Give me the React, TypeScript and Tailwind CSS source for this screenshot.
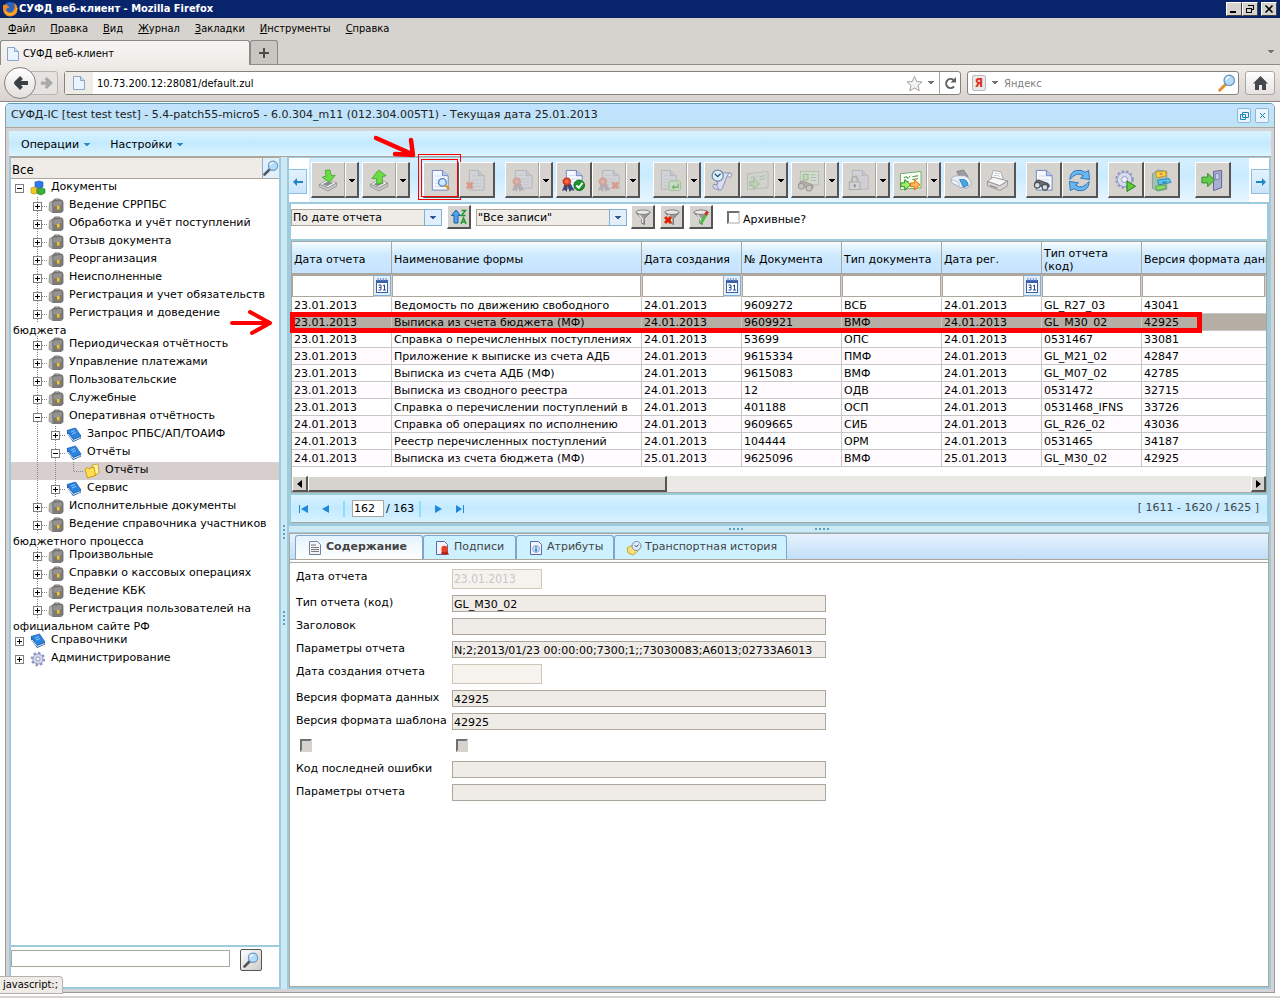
import type { ReactNode } from "react";

/* ---------- small drawings ---------- */

const Caret = ({ className = "" }: { className?: string }) => (
  <svg width="6" height="4" viewBox="0 0 6 4" className={className} shapeRendering="crispEdges">
    <path d="M0 0h6L3 4z" fill="currentColor" />
  </svg>
);

const Page = ({ x = 2, y = 1, w = 16, h = 20, dim = false }: { x?: number; y?: number; w?: number; h?: number; dim?: boolean }) => {
  const f = Math.round(w * 0.36);
  return (
    <g transform={`translate(${x} ${y})`}>
      <path d={`M.5 .5H${w - f}L${w} ${f}V${h}H.5z`} fill={dim ? "#d2d3d6" : "#f4f8ff"} stroke={dim ? "#b3b5be" : "#7484bc"} />
      <path d={`M${w - f} .5V${f}H${w}`} fill={dim ? "#c4c6ce" : "#b4c8ec"} stroke={dim ? "#b3b5be" : "#7484bc"} />
      <path d={`M3 ${h * 0.3}H${w - f - 1}M3 ${h * 0.5}H${w - 3}M3 ${h * 0.66}H${w - 3}M3 ${h * 0.82}H${w - 3}`} stroke={dim ? "#c3c5cb" : "#d0d9ea"} />
    </g>
  );
};

const Seal = ({ x = 5, y = 14, dim = false, r = 4 }: { x?: number; y?: number; dim?: boolean; r?: number }) => (
  <g>
    <path d={`M${x - 2} ${y + 2}l-3 8 3-1 2 2 1-6 2 6 2-2 3 1-4-8z`} fill={dim ? "#b4aeb4" : "#3b4672"} />
    <circle cx={x} cy={y} r={r} fill={dim ? "#d2a599" : "#e04020"} stroke={dim ? "#cb9c90" : "#b02810"} strokeDasharray="1.5 1" />
    <circle cx={x} cy={y} r={r / 2} fill={dim ? "#dab6ac" : "#ff7048"} />
  </g>
);

const Cross = ({ x, y, dim = false, s = 3 }: { x: number; y: number; dim?: boolean; s?: number }) => (
  <path d={`M${x - s} ${y - s}L${x + s} ${y + s}M${x + s} ${y - s}L${x - s} ${y + s}`} stroke={dim ? "#d99a88" : "#dd2200"} strokeWidth="3" />
);

const Tray = () => (
  <g strokeWidth=".7">
    <path d="M2.500 16l9-5 9 3.500-9 5z" fill="#fafafa" stroke="#888" />
    <path d="M2.500 16v2.500l9 4.500 9-5v-3.500l-9 5z" fill="#c4c6ca" stroke="#888" />
    <path d="M5.500 16l6.500-3.500 5 2-6.500 3.500z" fill="#8b8d92" />
  </g>
);

const GreenArrow = ({ x, y, orange = false, dim = false }: { x: number; y: number; orange?: boolean; dim?: boolean }) => (
  <path
    transform={`translate(${x} ${y})`}
    d="M0 3.500h4V0l6 5.500-6 5.500V7.500H0z"
    fill={orange ? "#ffb45c" : dim ? "#bdd2b6" : "#a4ee70"}
    stroke={orange ? "#e07000" : dim ? "#9fb99a" : "#25891c"}
  />
);

const Card = ({ dim = false }: { dim?: boolean }) => (
  <g>
    <path d="M1.500 5L23 2.500V19.500L1.500 21.500z" fill={dim ? "#d0d3cd" : "#fafff6"} stroke={dim ? "#b4bcb1" : "#6aa866"} />
    <path d="M5 9l3-1 1 2 3-3M14 8l6-1M14 11l6-1M5 13h5" stroke={dim ? "#afbcab" : "#3f8a3c"} fill="none" />
  </g>
);

const Binocs = ({ dim = false }: { dim?: boolean }) => (
  <g stroke={dim ? "#a29f99" : "#4c4f54"} fill={dim ? "#cbc7c0" : "#d4dce4"} strokeWidth="1.200">
    <path d="M2 16l2-3q2-1 3 0l8 3q2 1 2 3l-2 2-10-3z" fill={dim ? "#b4b0a9" : "#6e7076"} />
    <circle cx="4.500" cy="18" r="3" />
    <circle cx="12.500" cy="20" r="3" />
  </g>
);

const Gear = ({ cx, cy, r, fill = "#d7dbee", stroke = "#8f97c2" }: { cx: number; cy: number; r: number; fill?: string; stroke?: string }) => (
  <g>
    <circle cx={cx} cy={cy} r={r + 0.5} fill="none" stroke={stroke} strokeWidth="2.400" strokeDasharray="2.400 2.200" />
    <circle cx={cx} cy={cy} r={r - 0.4} fill={fill} stroke={stroke} />
    <circle cx={cx} cy={cy} r={r / 2.6} fill="#f3f3f8" stroke={stroke} />
  </g>
);

const Magnifier = ({ size = 16, handle = "#54585e" }: { size?: number; handle?: string }) => (
  <svg width={size} height={size} viewBox="0 0 16 16">
    <path d="M1.500 14.500L7 9" stroke={handle} strokeWidth="2.600" strokeLinecap="round" />
    <circle cx="10" cy="5.700" r="4.600" fill="#b4dcf8" stroke="#6d98c4" strokeWidth="1.200" />
    <path d="M7.200 5a3 3 0 0 1 3-2.300" stroke="#fff" strokeWidth="1.200" fill="none" />
  </svg>
);

const glyphs: Record<string, ReactNode> = {
  import: (
    <>
      <Tray />
      <path d="M8.500 1.500l5-.5 1.500 6 4-.500-6 7.500-7.500-5.500 4-1z" fill="#6cdc44" stroke="#3aa028" strokeWidth=".8" />
    </>
  ),
  export: (
    <>
      <Tray />
      <path d="M11 1l8 6-4 1v6.500l-6 1.500V10L4 10z" fill="#6cdc44" stroke="#3aa028" strokeWidth=".8" />
    </>
  ),
  preview: (
    <>
      <Page x={3} y={1} w={17} h={21} />
      <circle cx="14" cy="14" r="4" fill="#cde9ff" stroke="#5080d0" strokeWidth="1.400" />
      <path d="M17 17l4 4" stroke="#d89a20" strokeWidth="2.400" />
    </>
  ),
  remove: (
    <>
      <Page x={4} y={1} w={16} h={21} dim />
      <Cross x={5} y={17} dim />
    </>
  ),
  sealDim: (
    <>
      <Page x={4} y={1} w={18} h={19} dim />
      <Seal x={6} y={13} dim />
    </>
  ),
  sealOk: (
    <>
      <Page x={4} y={1} w={17} h={19} />
      <Seal x={5} y={13} />
      <circle cx="18" cy="17" r="5.500" fill="#18942a" stroke="#0d6a1a" />
      <path d="M15 17l2.400 2.600L21.500 14.500" stroke="#fff" strokeWidth="2" fill="none" />
    </>
  ),
  sealNo: (
    <>
      <Page x={4} y={1} w={18} h={19} dim />
      <Seal x={5} y={13} dim />
      <Cross x={18} y={17} dim />
    </>
  ),
  pageBack: (
    <>
      <Page x={2} y={1} w={16} h={20} dim />
      <rect x="10.500" y="12.500" width="12" height="10" rx="2" fill="#c8dcc2" stroke="#9dbf96" />
      <path d="M20 15v4h-6m2-2l-2 2 2 2" stroke="#7fb078" fill="none" strokeWidth="1.400" />
    </>
  ),
  history: (
    <>
      <path d="M8 4h12q3 0 2 3h-4L13 20q-1 3-4 2l-5-2q-2-3 0-4h4z" fill="#d9ddf0" stroke="#8890b4" />
      <circle cx="20.500" cy="6.500" r="2" fill="#eef0fa" stroke="#8890b4" />
      <path d="M4 16q4 0 5 6" stroke="#8890b4" />
      <circle cx="8" cy="7" r="5.800" fill="#dcf1fb" stroke="#6f8ca8" strokeWidth="1.400" />
      <path d="M5 5l3 3 3-3" stroke="#27527c" fill="none" strokeWidth="1.400" />
    </>
  ),
  cardDim: (
    <>
      <Card dim />
      <GreenArrow x={4} y={10} dim />
    </>
  ),
  idView: (
    <>
      <rect x="3.500" y="2.500" width="19" height="14" fill="#d5dbd1" stroke="#b0beaa" />
      <rect x="6.500" y="5.500" width="5" height="6" fill="#c0d8b6" stroke="#96ba8a" />
      <path d="M14 6h6M14 9h6M14 12h6" stroke="#aebba8" />
      <Binocs dim />
    </>
  ),
  lock: (
    <>
      <Page x={4} y={1} w={17} h={20} dim />
      <path d="M4 14v-3a3 3 0 0 1 6 0v3" fill="none" stroke="#b0b0b0" strokeWidth="1.800" />
      <rect x="1.500" y="13.500" width="11" height="8" fill="#d2d2d2" stroke="#aaa" />
      <path d="M7 16v3" stroke="#888" strokeWidth="1.800" />
    </>
  ),
  cardSend: (
    <>
      <Card />
      <GreenArrow x={2} y={11} />
      <GreenArrow x={12} y={11} orange />
    </>
  ),
  fax: (
    <g strokeWidth=".8">
      <path d="M7 2.500l7-1.500 5 7-8 2z" fill="#9a9ca2" stroke="#77797f" />
      <path d="M1.500 10q2-3 6-3l8 0q6 3 7 9l-5 4-7-1-8-4q-2-2-1-5z" fill="#e9eff6" stroke="#93a0b2" />
      <path d="M10 11l5 0q4 2 4 6l-5 2z" fill="#49a4e6" stroke="#2b78b8" />
      <path d="M2 11l7 2.500 1 4" stroke="#aebccc" />
    </g>
  ),
  print: (
    <g strokeWidth=".8">
      <path d="M5.500 9L7.500 1.500l8 1.500 2.500 8z" fill="#fff" stroke="#999" />
      <path d="M8.500 4l6 1M8 6.500l7 1" stroke="#b4bccc" />
      <path d="M1.500 13l6-4.500 15 4-8 5z" fill="#f6f6f6" stroke="#8a8a8a" />
      <path d="M1.500 13v4.500l13 5 8-5v-5l-8 5z" fill="#d6d6d6" stroke="#8a8a8a" />
      <path d="M4 17l8 3" stroke="#666" />
    </g>
  ),
  find: (
    <>
      <Page x={4} y={1} w={17} h={21} />
      <g transform="translate(1 -1)">
        <Binocs />
      </g>
    </>
  ),
  refresh: (
    <g fill="#6ab8f0" stroke="#2a72bc" strokeLinejoin="round">
      <path d="M2 11Q2 3 9 1.500q5-1 9 2l3.500-2 1 9.500-9.500-1.500 3-2.500q-3-2.500-7-1.500Q5 7 2 11z" />
      <path d="M22 13q0 8-7 9.500-5 1-9-2l-3.500 2-1-9.500 9.500 1.500-3 2.500q3 2.500 7 1.500 4-1.500 7-5.500z" />
    </g>
  ),
  gearRun: (
    <>
      <Gear cx={11} cy={11} r={8} />
      <path d="M13.500 12.500l9 5.500-9 5.500z" fill="#5ecb3c" stroke="#1e7d18" />
    </>
  ),
  cabinet: (
    <g strokeWidth=".8">
      <path d="M2.500 5l6-4 9 1.500V21l-9 2-6-3z" fill="#a3c0b2" stroke="#6f9283" />
      <path d="M6 3.500l10-1.500 1 5-10 2z" fill="#ffd24a" stroke="#c98a00" />
      <path d="M8 11.500l12-1.500 2 4-13 2.500z" fill="#56c4f0" stroke="#2277aa" />
      <path d="M6 18l10-1.500v4l-9 2z" fill="#8bda6a" stroke="#4a9a3a" />
      <path d="M10 5.500l3-.5M13 14l4-.5" stroke="#444" />
    </g>
  ),
  exit: (
    <>
      <path d="M13 2.500L21.500 1.500v18L13 22.500z" fill="#a6aed2" stroke="#5c648e" />
      <path d="M15 5l4-.5v6l-4 .5z" fill="#c8cee8" stroke="#7078a4" strokeWidth=".8" />
      <path d="M1 8.500h6V4.500l7 7-7 7v-4H1z" fill="#62cc48" stroke="#2a8a22" />
    </>
  ),
};

const Glyph = ({ name }: { name: string }) => (
  <svg width="23" height="23" viewBox="0 0 24 24" fill="none" aria-hidden="true">
    {glyphs[name]}
  </svg>
);

const SmallGlyph = ({ children, size = 16 }: { children: ReactNode; size?: number }) => (
  <svg width={size} height={size} viewBox="0 0 16 16" fill="none" className="shrink-0">
    {children}
  </svg>
);

const treeIcons: Record<string, ReactNode> = {
  cubes: (
    <>
      <path d="M5 2l4-1 4 1v5l-4 1.500L5 7z" fill="#2f78e8" stroke="#1a50b0" strokeWidth=".6" />
      <path d="M1 8l3-1 3 1v5l-3 1-3-1z" fill="#f2c820" stroke="#b08a00" strokeWidth=".6" />
      <path d="M7 9l4-1 4 1v4l-4 2-4-1.500z" fill="#3dae38" stroke="#1d7a20" strokeWidth=".6" />
    </>
  ),
  bag: (
    <>
      <path d="M6 2.500l1-1.500h4l1 1.500" stroke="#777" strokeWidth="1.200" />
      <path d="M4 3.500l2-1.500h8l1 2v9l-2 1.500H4.500z" fill="#7d7b78" stroke="#686663" strokeWidth=".8" />
      <path d="M4 3.500L1.500 4.500 1 12.500l3.500 2z" fill="#b4b2af" stroke="#8c8a87" strokeWidth=".8" />
      <path d="M5.500 4l8-1v4l-4 2-4-1z" fill="#969491" />
      <rect x="9" y="8" width="2.500" height="3.500" fill="#f4c522" />
    </>
  ),
  book: (
    <>
      <path d="M1 3.500L9.500 1l5.500 8-8 3.500z" fill="#2a84e0" stroke="#1a62b4" strokeWidth=".8" />
      <path d="M1 3.500v3L7 15l8-3.500V9l-8 3.500z" fill="#1a5cac" />
      <path d="M2 7l5.200 6.500 7.300-3" stroke="#eef4fb" />
      <path d="M5 5l4-1.500M6 7l4-1.500" stroke="#8cc4ff" />
    </>
  ),
  folder: (
    <>
      <path d="M8 2l6-1 1 9-6 3z" fill="#fff3a8" stroke="#c89a10" strokeWidth=".8" />
      <path d="M1 6l2-1.500 1.500 1 5.500-1.500 1.500 8.500-8 2.500z" fill="#ffdf50" stroke="#c08a00" strokeWidth=".8" />
    </>
  ),
  gear: <Gear cx={8} cy={8} r={5.5} />,
};

/* ---------- browser chrome ---------- */

const menuItems = ["Файл", "Правка", "Вид", "Журнал", "Закладки", "Инструменты", "Справка"];

const Sheet = () => (
  <SmallGlyph>
    <path d="M2.500 1.500h7l4 4v9h-11z" fill="#eaf4ff" stroke="#8aa6cc" />
    <path d="M9.500 1.500v4h4" fill="#c8def8" stroke="#8aa6cc" />
  </SmallGlyph>
);

const WinButton = ({ label, children }: { label: string; children: ReactNode }) => (
  <button
    aria-label={label}
    className="flex h-[14px] w-[16px] items-center justify-center border border-t-white border-r-[#404040] border-b-[#404040] border-l-white bg-[#d6d3ce]"
  >
    <svg width="10" height="10" viewBox="0 0 10 10" fill="none" stroke="#000" shapeRendering="crispEdges">
      {children}
    </svg>
  </button>
);

const BrowserChrome = () => (
  <header className="font-['DejaVu_Sans_Condensed','DejaVu_Sans',sans-serif] text-[11px]">
    <div className="flex h-[18px] items-center bg-[#08246b] pr-[3px] pl-[2px] text-white">
      <SmallGlyph>
        <circle cx="8" cy="8" r="7" fill="#2c62c0" />
        <path d="M1 4q-1 11 7 11.500Q16 15 15.500 7q-1-4-4-5.500 2 3 1 5-1 5-5 5-4-.5-3-4l3-1-3-3z" fill="#f08a1c" />
        <path d="M3 11q3 4 8 2 3-2 4-6" stroke="#ffd040" />
      </SmallGlyph>
      <h1 className="ml-px flex-1 font-bold">СУФД веб-клиент - Mozilla Firefox</h1>
      <div className="flex">
        <WinButton label="Свернуть">
          <path d="M1 8h6" strokeWidth="2" />
        </WinButton>
        <WinButton label="Восстановить">
          <path d="M3.500 1.500h5v4h-2M3 1.500h6M1.500 4.500h5v4h-5zM1 4.500h6" />
        </WinButton>
        <span className="w-[3px]" />
        <WinButton label="Закрыть">
          <path d="M1.500 1.500l7 7M8.500 1.500l-7 7" strokeWidth="1.600" shapeRendering="auto" />
        </WinButton>
      </div>
    </div>
    <nav className="flex h-[22px] items-center gap-[15px] bg-[#d6d3ce] pl-2">
      {menuItems.map((m) => (
        <a key={m} href="#" className="text-black">
          <span className="underline">{m[0]}</span>
          {m.slice(1)}
        </a>
      ))}
    </nav>
    <div className="flex h-[25px] items-end border-b border-[#8c8a86] bg-[#d6d3ce]">
      <div className="-mb-px flex h-[25px] w-[250px] items-center gap-[2px] rounded-t-[3px] border border-b-0 border-[#8c8a86] bg-gradient-to-b from-[#f7f5f3] to-[#efebe7] pt-[2px] pl-1">
        <Sheet />
        <span>СУФД веб-клиент</span>
      </div>
      <button aria-label="Новая вкладка" className="flex h-[24px] w-[28px] items-center justify-center rounded-t-[3px] border border-b-0 border-[#8c8a86] bg-[#c9c6c2]">
        <svg width="10" height="10" viewBox="0 0 10 10" stroke="#4a4a4a" strokeWidth="2">
          <path d="M5 0v10M0 5h10" />
        </svg>
      </button>
      <span className="flex-1" />
      <Caret className="mr-[6px] mb-[10px] text-[#77736e]" />
    </div>
    <div className="flex h-[37px] items-center border-b border-[#8c8a86] bg-gradient-to-b from-[#efebe7] to-[#d9d3d0] pr-[5px] pl-[4px]">
      <button aria-label="Назад" className="z-10 flex h-[32px] w-[32px] items-center justify-center rounded-full border border-[#85827e] bg-gradient-to-b from-white to-[#e3dfdc]">
        <svg width="15" height="14" viewBox="0 0 15 14" fill="none" stroke="#3c4048" strokeWidth="4" strokeLinejoin="round">
          <path d="M8.500 1.500L3 7l5.500 5.500M3 7H15" />
        </svg>
      </button>
      <button aria-label="Вперёд" className="-ml-[6px] flex h-[24px] w-[28px] items-center justify-center rounded-r-[3px] border border-[#b9b5b1] bg-[#e6e2df] pl-1">
        <svg width="13" height="12" viewBox="0 0 16 14" fill="none" stroke="#a9a9a9" strokeWidth="4">
          <path d="M7 1l6 6-6 6M12.500 7H1" />
        </svg>
      </button>
      <div className="ml-[6px] flex h-[24px] flex-1 items-center rounded-[3px] border border-[#85827e] bg-white">
        <span className="flex h-full w-[28px] items-center justify-center bg-[#efebe7]">
          <Sheet />
        </span>
        <input aria-label="Адрес" defaultValue="10.73.200.12:28081/default.zul" className="min-w-0 flex-1 bg-transparent pt-[2px] pl-1 text-[11px] outline-none" />
        <svg width="17" height="17" viewBox="0 0 18 17" fill="#f2f2f2" stroke="#a09d99">
          <path d="M9 1l2.300 5.300 5.700.5-4.300 3.800 1.300 5.600L9 13.200l-5 3 1.300-5.600L1 6.800l5.700-.5z" />
        </svg>
        <Caret className="mx-[5px] text-[#77736e]" />
        <button aria-label="Обновить" className="flex h-full w-[21px] items-center justify-center border-l border-[#aaa6a2]">
          <svg width="13" height="13" viewBox="0 0 13 13" fill="none" stroke="#5e6064" strokeWidth="2">
            <path d="M10 9.500A4.500 4.500 0 1 1 9.500 3" />
            <path d="M12 0v5.500H6.500z" fill="#5e6064" stroke="none" />
          </svg>
        </button>
      </div>
      <div className="ml-[6px] flex h-[24px] w-[272px] items-center rounded-[3px] border border-[#85827e] bg-white pl-1">
        <span className="flex h-[16px] w-[14px] items-center justify-center rounded-[2px] border border-[#bbb] bg-[#e9e9e9] text-[12px] font-bold text-[#e0301e]">Я</span>
        <Caret className="mx-[6px] text-[#77736e]" />
        <input aria-label="Поиск" placeholder="Яндекс" className="min-w-0 flex-1 pt-[2px] text-[11px] outline-none placeholder:text-[#808080]" />
        <span className="mr-[2px]">
          <Magnifier size={18} handle="#e09030" />
        </span>
      </div>
      <button aria-label="Домой" className="ml-[6px] flex h-[24px] w-[30px] items-center justify-center rounded-[3px] border border-[#aaa6a2] bg-gradient-to-b from-white to-[#e6e2df]">
        <svg width="15" height="14" viewBox="0 0 15 14" fill="#45494f">
          <path d="M7.500 0L15 7.500h-2V14H9V9H6v5H2V7.500H0z" />
        </svg>
      </button>
    </div>
  </header>
);

/* ---------- left tree ---------- */

type Node = { level: number; icon: string; text: string; more?: string; open?: boolean; leaf?: boolean; selected?: boolean };

const tree: Node[] = [
  { level: 0, icon: "cubes", text: "Документы", open: true },
  { level: 1, icon: "bag", text: "Ведение СРРПБС" },
  { level: 1, icon: "bag", text: "Обработка и учёт поступлений" },
  { level: 1, icon: "bag", text: "Отзыв документа" },
  { level: 1, icon: "bag", text: "Реорганизация" },
  { level: 1, icon: "bag", text: "Неисполненные" },
  { level: 1, icon: "bag", text: "Регистрация и учет обязательств" },
  { level: 1, icon: "bag", text: "Регистрация и доведение", more: "бюджета" },
  { level: 1, icon: "bag", text: "Периодическая отчётность" },
  { level: 1, icon: "bag", text: "Управление платежами" },
  { level: 1, icon: "bag", text: "Пользовательские" },
  { level: 1, icon: "bag", text: "Служебные" },
  { level: 1, icon: "bag", text: "Оперативная отчётность", open: true },
  { level: 2, icon: "book", text: "Запрос РПБС/АП/ТОАИФ" },
  { level: 2, icon: "book", text: "Отчёты", open: true },
  { level: 3, icon: "folder", text: "Отчёты", leaf: true, selected: true },
  { level: 2, icon: "book", text: "Сервис" },
  { level: 1, icon: "bag", text: "Исполнительные документы" },
  { level: 1, icon: "bag", text: "Ведение справочника участников", more: "бюджетного процесса" },
  { level: 1, icon: "bag", text: "Произвольные" },
  { level: 1, icon: "bag", text: "Справки о кассовых операциях" },
  { level: 1, icon: "bag", text: "Ведение КБК" },
  { level: 1, icon: "bag", text: "Регистрация пользователей на", more: "официальном сайте РФ" },
  { level: 0, icon: "book", text: "Справочники" },
  { level: 0, icon: "gear", text: "Администрирование" },
];

const Toggle = ({ node }: { node: Node }) => (
  <svg width="18" height="18" viewBox="0 0 18 18" fill="none" shapeRendering="crispEdges" className="shrink-0">
    {node.level > 0 && <path d={node.leaf ? "M8.500 0v9" : "M8.500 0v18"} stroke="#888" strokeDasharray="1 1" />}
    {node.level > 0 && <path d="M9 9.500h9" stroke="#888" strokeDasharray="1 1" />}
    {!node.leaf && (
      <>
        <rect x="4.500" y="5.500" width="8" height="8" fill="#fff" stroke="#808080" />
        <path d={node.open ? "M6 9.500h5" : "M6 9.500h5M8.500 7v5"} stroke="#000" />
      </>
    )}
  </svg>
);

const Guide = ({ visible }: { visible: boolean }) => (
  <svg width="18" height="18" viewBox="0 0 18 18" shapeRendering="crispEdges" className="shrink-0">
    {visible && <path d="M8.500 0v18" stroke="#888" strokeDasharray="1 1" />}
  </svg>
);

const TreePanel = () => (
  <aside className="flex w-[272px] shrink-0 flex-col border-x-2 border-b-2 border-[#9ccbde] bg-white">
    <div className="flex h-[22px] border-t border-b border-[#ada69c] bg-[#efebe7]">
      <span className="flex-1 pl-px font-['DejaVu_Sans_Condensed','DejaVu_Sans',sans-serif] text-[13px] leading-[24px]">Все</span>
      <button aria-label="Найти" className="flex w-[17px] items-center justify-center border-l border-[#7fb0d8] bg-[#e2effa]">
        <Magnifier size={16} />
      </button>
    </div>
    <ul className="flex-1 text-[11px]">
      {tree.map((n, i) => (
        <li key={i} className={n.selected ? "bg-[#d6cfce]" : ""}>
          <div className="flex h-[18px] items-start">
            {Array.from({ length: n.level }, (_, k) => (
              <Guide key={k} visible={k > 0} />
            ))}
            <Toggle node={n} />
            <span className="flex h-[18px] w-[18px] shrink-0 items-center justify-center">
              <SmallGlyph>{treeIcons[n.icon]}</SmallGlyph>
            </span>
            <a href="#" className="pl-[4px] leading-[15px] whitespace-nowrap">
              {n.text}
            </a>
          </div>
          {n.more && (
            <a href="#" className="block h-[13px] pl-[2px] leading-[15px] whitespace-nowrap">
              {n.more}
            </a>
          )}
        </li>
      ))}
    </ul>
    <div className="flex h-[42px] items-start border-t-2 border-[#9ccbde] pt-[3px]">
      <input aria-label="Поиск по дереву" className="h-[17px] w-[219px] border border-[#ada69c] px-1 text-[11px]" />
      <button aria-label="Искать" className="-mt-px ml-[10px] flex h-[22px] w-[22px] items-center justify-center rounded-[2px] border border-[#555] bg-gradient-to-br from-white to-[#cfcbc8]">
        <Magnifier size={16} />
      </button>
    </div>
  </aside>
);

/* ---------- toolbar ---------- */

type Tool = { icon: string; label: string; menu?: boolean; gap: string };

const tools: Tool[] = [
  { icon: "import", label: "Импорт", menu: true, gap: "ml-[2px]" },
  { icon: "export", label: "Экспорт", menu: true, gap: "ml-[3px]" },
  { icon: "preview", label: "Просмотр", gap: "ml-[13px]" },
  { icon: "remove", label: "Удалить", gap: "" },
  { icon: "sealDim", label: "Подписать", menu: true, gap: "ml-[10px]" },
  { icon: "sealOk", label: "Проверить подпись", gap: "ml-[3px]" },
  { icon: "sealNo", label: "Удалить подпись", menu: true, gap: "" },
  { icon: "pageBack", label: "Вернуть", menu: true, gap: "ml-[13px]" },
  { icon: "history", label: "История", gap: "ml-[3px]" },
  { icon: "cardDim", label: "Отправить", menu: true, gap: "" },
  { icon: "idView", label: "Реквизиты", menu: true, gap: "ml-[3px]" },
  { icon: "lock", label: "Блокировка", menu: true, gap: "ml-[3px]" },
  { icon: "cardSend", label: "Передать", menu: true, gap: "ml-[3px]" },
  { icon: "fax", label: "Печать формы", gap: "ml-[3px]" },
  { icon: "print", label: "Печать", gap: "" },
  { icon: "find", label: "Поиск", gap: "ml-[10px]" },
  { icon: "refresh", label: "Обновить список", gap: "" },
  { icon: "gearRun", label: "Выполнить", gap: "ml-[10px]" },
  { icon: "cabinet", label: "Архив", gap: "" },
  { icon: "exit", label: "Выход", gap: "ml-[15px]" },
];

const ToolButton = ({ tool }: { tool: Tool }) => (
  <div className={`relative flex h-[36px] shrink-0 ${tool.gap}`}>
    <button
      aria-label={tool.label}
      className={`flex items-center justify-center border border-t-white border-l-white bg-[#d6d3ce] pt-[2px] ${
        tool.menu ? "w-[34px] border-r border-r-[#aaa6a0] border-b-2 border-b-[#555]" : "w-[36px] border-r-2 border-b-2 border-r-[#555] border-b-[#555]"
      }`}
    >
      <Glyph name={tool.icon} />
    </button>
    {tool.menu && (
      <button
        aria-label={`${tool.label}: меню`}
        className="flex w-[14px] items-center justify-center border border-r-2 border-b-2 border-t-white border-r-[#555] border-b-[#555] border-l-white bg-[#d6d3ce] pt-[2px]"
      >
        <Caret />
      </button>
    )}
    {tool.icon === "preview" && (
      <span className="pointer-events-none absolute -top-[8px] -right-[2px] -bottom-[2px] -left-[5px] border border-[#f00] p-[2px] pt-[4px]">
        <span className="block h-full border border-[#f00]" />
      </span>
    )}
  </div>
);

const Toolbar = () => (
  <div className="flex h-[44px] items-center bg-gradient-to-b from-[#d6efff] via-[#c9ebff] via-40% to-[#e8f5ff]">
    <div className="flex h-full w-[20px] items-center bg-white pt-[3px]">
      <button aria-label="Прокрутить влево" className="flex h-[25px] w-[18px] items-center justify-center border border-l-0 border-[#8cbfe4] bg-gradient-to-b from-[#e4f3fd] to-[#cbe4fa]">
        <svg width="10" height="8" viewBox="0 0 10 8" fill="#1c86c8">
          <path d="M0 4l4-4v3h6v2H4v3z" />
        </svg>
      </button>
    </div>
    <div className="flex h-full min-w-0 flex-1 items-center" role="toolbar">
      {tools.map((t) => (
        <ToolButton key={t.icon} tool={t} />
      ))}
    </div>
    <div className="flex h-full w-[20px] shrink-0 items-center justify-end bg-white pt-[3px]">
      <button aria-label="Прокрутить вправо" className="flex h-[25px] w-[18px] items-center justify-center border border-r-0 border-[#8cbfe4] bg-gradient-to-b from-[#e4f3fd] to-[#cbe4fa]">
        <svg width="10" height="8" viewBox="0 0 10 8" fill="#1c86c8">
          <path d="M10 4L6 0v3H0v2h6v3z" />
        </svg>
      </button>
    </div>
  </div>
);

/* ---------- filters ---------- */

const Combo = ({ label, value }: { label: string; value: string }) => (
  <div className="relative h-[18px] w-[151px]">
    <select aria-label={label} className="block h-[17px] w-full appearance-none border border-[#ada69c] bg-[#efebe7] pl-px text-[11px] leading-[15px]">
      <option>{value}</option>
    </select>
    <span className="pointer-events-none absolute top-0 right-0 flex h-[17px] w-[18px] items-center justify-center border border-[#7fb0d8] bg-[#e2effa]">
      <Caret className="text-[#2c5a94]" />
    </span>
  </div>
);

const MiniButton = ({ label, children }: { label: string; children: ReactNode }) => (
  <button aria-label={label} className="flex h-[24px] w-[24px] items-center justify-center border border-r-2 border-b-2 border-t-white border-r-[#555] border-b-[#555] border-l-white bg-[#d6d3ce]">
    <SmallGlyph size={16}>{children}</SmallGlyph>
  </button>
);

const Funnel = () => (
  <>
    <path d="M1 3.500l5.500 6V14l3 1.500v-6l5.500-6z" fill="#9c9c9c" stroke="#6c6c6c" strokeWidth=".8" />
    <path d="M4 5.500l3.500 4.500v4" stroke="#e4e4e4" strokeWidth="1.400" />
    <ellipse cx="8" cy="3.200" rx="7" ry="2.200" fill="#e8e8e8" stroke="#6c6c6c" strokeWidth=".8" />
  </>
);

const FilterBar = () => (
  <div className="flex h-[35px] items-start bg-white">
    <div className="pt-[5px]">
      <Combo label="Сортировка" value="По дате отчета" />
    </div>
    <div className="mx-[5px] pt-px">
      <MiniButton label="Порядок сортировки">
        <path d="M5 1L.5 6.500H3V14h4V6.500h2.500z" fill="#4aa4ee" stroke="#1d5ca8" />
        <path d="M10.500 1.500h4l-4 5h4" stroke="#1c9a30" strokeWidth="1.500" />
        <path d="M10 15l2.500-6 2.500 6M11 13h3" stroke="#1c9a30" strokeWidth="1.500" />
      </MiniButton>
    </div>
    <div className="pt-[5px]">
      <Combo label="Фильтр" value={'"Все записи"'} />
    </div>
    <div className="ml-[4px] flex gap-[5px] pt-px">
      <MiniButton label="Фильтр">
        <Funnel />
      </MiniButton>
      <MiniButton label="Сбросить фильтр">
        <Funnel />
        <Cross x={4} y={11} s={3} />
      </MiniButton>
      <MiniButton label="Изменить фильтр">
        <Funnel />
        <path d="M14 4l-6 10" stroke="#4cc040" strokeWidth="3" />
        <path d="M14.500 2.500l-2 3.500" stroke="#d03030" strokeWidth="3" />
      </MiniButton>
    </div>
    <label className="ml-[14px] flex h-[32px] items-center gap-[3px] text-[11px]">
      <input type="checkbox" className="-mt-1.5 h-[13px] w-[13px] appearance-none border-2 border-t-[#707070] border-r-[#d6d3ce] border-b-[#d6d3ce] border-l-[#707070] bg-white" />
      Архивные?
    </label>
  </div>
);

/* ---------- grid ---------- */

const columns = [
  { title: "Дата отчета", width: "w-[100px]", date: true },
  { title: "Наименование формы", width: "w-[250px]" },
  { title: "Дата создания", width: "w-[100px]", date: true },
  { title: "№ Документа", width: "w-[100px]" },
  { title: "Тип документа", width: "w-[100px]" },
  { title: "Дата рег.", width: "w-[100px]", date: true },
  { title: "Тип отчета (код)", width: "w-[100px]" },
  { title: "Версия формата данных", width: "whitespace-nowrap overflow-hidden" },
];

const rows = [
  ["23.01.2013", "Ведомость по движению свободного", "24.01.2013", "9609272", "ВСБ", "24.01.2013", "GL_R27_03", "43041"],
  ["23.01.2013", "Выписка из счета бюджета (МФ)", "24.01.2013", "9609921", "ВМФ", "24.01.2013", "GL_M30_02", "42925"],
  ["23.01.2013", "Справка о перечисленных поступлениях", "24.01.2013", "53699", "ОПС", "24.01.2013", "0531467", "33081"],
  ["23.01.2013", "Приложение к выписке из счета АДБ", "24.01.2013", "9615334", "ПМФ", "24.01.2013", "GL_M21_02", "42847"],
  ["23.01.2013", "Выписка из счета АДБ (МФ)", "24.01.2013", "9615083", "ВМФ", "24.01.2013", "GL_M07_02", "42785"],
  ["23.01.2013", "Выписка из сводного реестра", "24.01.2013", "12", "ОДВ", "24.01.2013", "0531472", "32715"],
  ["23.01.2013", "Справка о перечислении поступлений в", "24.01.2013", "401188", "ОСП", "24.01.2013", "0531468_IFNS", "33726"],
  ["24.01.2013", "Справка об операциях по исполнению", "24.01.2013", "9609665", "СИБ", "24.01.2013", "GL_R26_02", "43036"],
  ["24.01.2013", "Реестр перечисленных поступлений", "24.01.2013", "104444", "ОРМ", "24.01.2013", "0531465", "34187"],
  ["24.01.2013", "Выписка из счета бюджета (МФ)", "25.01.2013", "9625096", "ВМФ", "25.01.2013", "GL_M30_02", "42925"],
];

const Calendar = () => (
  <svg width="12" height="15" viewBox="0 0 12 15">
    <rect x=".5" y="2.500" width="11" height="12" fill="#fff" stroke="#3b5fa8" />
    <path d="M0 2h12v3H0z" fill="#3b5fa8" />
    <path d="M2 0v3M4.700 0v3M7.300 0v3M10 0v3" stroke="#6f8cc8" />
    <path d="M2.500 7h2.500v5H2.500M3 9.500h2M7 8l1.500-1v5M7 12h3" stroke="#26478c" fill="none" />
  </svg>
);

const Grid = () => (
  <div className="relative border-t border-r border-l border-[#ada69c] bg-white">
    <div className="overflow-hidden">
      <table className="w-full table-fixed border-separate border-spacing-0 text-[11px]">
        <thead>
          <tr className="h-[33px]">
            {columns.map((c) => (
              <th
                key={c.title}
                className={`${c.width} border-r border-b-2 border-[#ada69c] bg-gradient-to-b from-[#f4fbff] via-[#cfeafe] via-40% to-[#c4e3ff] p-0 pt-[4px] pl-[2px] text-left leading-[13px] font-normal last:border-r-0`}
              >
                {c.title === "Тип отчета (код)" ? (
                  <>
                    Тип отчета
                    <br />
                    (код)
                  </>
                ) : (
                  c.title
                )}
              </th>
            ))}
          </tr>
          <tr className="h-[22px] bg-[#d6cfce]">
            {columns.map((c) => (
              <td key={c.title} className="p-0">
                <div className="flex h-[22px] pr-px">
                  <input aria-label={`Фильтр: ${c.title}`} className="h-[22px] min-w-0 flex-1 border border-[#ada69c] bg-white px-1 outline-none" />
                  {c.date && (
                    <button aria-label="Выбрать дату" className="flex h-[21px] w-[17px] items-center justify-center border border-l-0 border-[#7fb0d8] bg-[#e2effa]">
                      <Calendar />
                    </button>
                  )}
                </div>
              </td>
            ))}
          </tr>
        </thead>
        <tbody>
          {rows.map((r, i) => (
            <tr key={i} className={i === 1 ? "bg-[#b5aea5]" : i % 2 ? "bg-[#fffbff]" : "bg-white"}>
              {r.map((cell, j) => (
                <td key={j} className="h-[17px] overflow-hidden border-r border-b border-[#c6c7c6] p-0 pt-[2px] pl-[2px] leading-[14px] whitespace-nowrap last:border-r-0">
                  {cell}
                </td>
              ))}
            </tr>
          ))}
        </tbody>
      </table>
    </div>
    <div className="pointer-events-none absolute top-[70px] -left-[2px] h-[21px] w-[912px] border-[5px] border-[#f00]" />
    <div className="mt-[9px] flex h-[17px] border-b border-[#ada69c] bg-[#ebe9e5]">
      <button aria-label="Влево" className="flex w-[16px] items-center justify-center border border-r-2 border-b-2 border-t-white border-r-[#555] border-b-[#555] border-l-white bg-[#d6d3ce]">
        <svg width="5" height="8" viewBox="0 0 5 8">
          <path d="M5 0v8L0 4z" />
        </svg>
      </button>
      <div className="w-[359px] border border-r-2 border-b-2 border-t-white border-r-[#555] border-b-[#555] border-l-white bg-[#d6d3ce]" />
      <span className="flex-1" />
      <button aria-label="Вправо" className="flex w-[15px] items-center justify-center border border-r-2 border-b-2 border-t-white border-r-[#555] border-b-[#555] border-l-white bg-[#d6d3ce]">
        <svg width="5" height="8" viewBox="0 0 5 8">
          <path d="M0 0v8l5-4z" />
        </svg>
      </button>
    </div>
  </div>
);

const PageButton = ({ label, d }: { label: string; d: string }) => (
  <button aria-label={label} className="flex h-[20px] w-[22px] items-center justify-center">
    <svg width="10" height="8" viewBox="0 0 10 8" fill="#1e88dc">
      <path d={d} />
    </svg>
  </button>
);

const Pager = () => (
  <div className="flex h-[28px] items-center border-b border-[#ada69c] bg-gradient-to-b from-[#d8f2ff] via-[#c3eaff] to-[#d8f2ff] text-[11px]">
    <div className="ml-[2px] flex">
      <PageButton label="Первая" d="M0 0h1v8H0zM9 0v8L2 4z" />
      <PageButton label="Предыдущая" d="M8 0v8L1 4z" />
    </div>
    <span className="mx-[6px] h-[16px] w-[2px] bg-[#8fdcff]" />
    <input aria-label="Страница" defaultValue="162" className="ml-px h-[17px] w-[32px] border border-[#ada69c] bg-white pl-px" />
    <span className="ml-[2px] pt-px">/ 163</span>
    <span className="mr-[6px] ml-[5px] h-[16px] w-[2px] bg-[#8fdcff]" />
    <div className="flex">
      <PageButton label="Следующая" d="M2 0v8l7-4z" />
      <PageButton label="Последняя" d="M1 0v8l6-4zM8 0h1v8H8z" />
    </div>
    <span className="flex-1 pr-[8px] text-right text-[#444]">[ 1611 - 1620 / 1625 ]</span>
  </div>
);

/* ---------- details ---------- */

const tabs = [
  {
    text: "Содержание",
    icon: (
      <>
        <path d="M2.500 1.500h8l3 3v10h-11z" fill="#f4f4f8" stroke="#777fa0" />
        <path d="M4 5h5M4 7.500h8M4 9.500h8M4 11.500h8" stroke="#777" />
      </>
    ),
    width: "w-[128px]",
  },
  {
    text: "Подписи",
    icon: (
      <>
        <path d="M1.500 1.500h8l3 3v10h-11z" fill="#f4f4f8" stroke="#5b6aa8" />
        <path d="M7 10l-1 5 2-1 2 1 2-1 2 1-2-5z" fill="#c02010" />
        <circle cx="9.500" cy="9" r="3.200" fill="#e84020" />
      </>
    ),
    width: "w-[93px]",
  },
  {
    text: "Атрибуты",
    icon: (
      <>
        <path d="M2.500 1.500h8l3 3v10h-11z" fill="#f4f4f8" stroke="#5b6aa8" />
        <circle cx="8" cy="9" r="3.500" fill="#c4e0f8" stroke="#8ab4dc" />
        <path d="M8 6.500v1M8 8.500v3" stroke="#1c58a8" strokeWidth="1.400" />
      </>
    ),
    width: "w-[98px]",
  },
  {
    text: "Транспортная история",
    icon: (
      <>
        <path d="M1 8l6-3 5 6-5 4-5-2z" fill="#f6e07c" stroke="#c8a830" />
        <circle cx="10.500" cy="6" r="4.500" fill="#dceefa" stroke="#7c88a8" />
        <path d="M8.500 5l2 2 2-2.500" stroke="#36507c" />
      </>
    ),
    width: "w-[173px]",
  },
];

const Tabs = () => (
  <div className="flex h-[27px] items-end border-t border-b border-[#ada69c] bg-gradient-to-b from-[#e6f2fd] to-[#c2dff7] pl-[5px] text-[11px]" role="tablist">
    {tabs.map((t, i) => (
      <button
        key={t.text}
        role="tab"
        aria-selected={i === 0}
        className={`flex h-[24px] shrink-0 items-center gap-[3px] rounded-t-[3px] border border-b-0 border-[#7fa6c8] pl-[11px] whitespace-nowrap text-[#444] ${t.width} ${
          i === 0 ? "bg-gradient-to-b from-[#e4f3fd] to-white font-bold" : "bg-[#cdf1ff]"
        }`}
      >
        <SmallGlyph>{t.icon}</SmallGlyph>
        {t.text}
      </button>
    ))}
  </div>
);

const fields: { label: string; value?: string; kind: "text" | "date" | "check" }[] = [
  { label: "Дата отчета", value: "23.01.2013", kind: "date" },
  { label: "Тип отчета (код)", value: "GL_M30_02", kind: "text" },
  { label: "Заголовок", kind: "text" },
  { label: "Параметры отчета", value: "N;2;2013/01/23 00:00:00;7300;1;;73030083;A6013;02733A6013", kind: "text" },
  { label: "Дата создания отчета", kind: "date" },
  { label: "Версия формата данных", value: "42925", kind: "text" },
  { label: "Версия формата шаблона", value: "42925", kind: "text" },
  { label: "", kind: "check" },
  { label: "Код последней ошибки", kind: "text" },
  { label: "Параметры отчета", kind: "text" },
];

const greyCheck = "mx-[4px] mt-[3px] h-[13px] w-[12px] appearance-none border-2 border-t-[#707070] border-r-[#d6d3ce] border-b-[#d6d3ce] border-l-[#707070] bg-[#d6d3ce]";

const Details = () => (
  <form className="mt-[2px] flex flex-1 flex-col gap-[6px] border-t border-[#ada69c] bg-white pt-[6px] pl-[6px] text-[11px]">
    {fields.map((f, i) =>
      f.kind === "check" ? (
        <div key={i} className="flex h-[19px]">
          <div className="w-[156px]">
            <input type="checkbox" aria-label="Признак отчета" className={greyCheck} />
          </div>
          <input type="checkbox" aria-label="Признак данных" className={greyCheck} />
        </div>
      ) : (
        <div key={i} className="flex items-start">
          <label htmlFor={`field-${i}`} className="h-[17px] w-[156px] shrink-0 leading-[15px] whitespace-nowrap">
            {f.label}
          </label>
          {f.kind === "date" ? (
            <input
              id={`field-${i}`}
              disabled
              defaultValue={f.value}
              className="h-[20px] w-[90px] border border-[#cdc9b8] bg-[#f6f3ef] pl-px font-['DejaVu_Sans_Condensed','DejaVu_Sans',sans-serif] text-[12px] text-[#c6c6c6]"
            />
          ) : (
            <input id={`field-${i}`} readOnly defaultValue={f.value} className="h-[17px] w-[374px] border border-[#ada69c] bg-[#efebe7] pt-px pl-px outline-none" />
          )}
        </div>
      ),
    )}
  </form>
);

/* ---------- application window ---------- */

const Grip = ({ vertical = false }: { vertical?: boolean }) => (
  <span className={`flex gap-[2px] ${vertical ? "flex-col" : ""}`}>
    {[0, 1, 2, 3].map((k) => (
      <i key={k} className="h-[2px] w-[2px] bg-[#5aa2c4]" />
    ))}
  </span>
);

const AppMenu = () => (
  <nav className="flex h-[26px] items-center border-b border-[#ada69c] bg-gradient-to-b from-[#d8f2ff] via-[#c3eaff] to-[#dcf4ff] pt-[3px] pl-[12px] text-[11px]">
    {["Операции", "Настройки"].map((m) => (
      <button key={m} className="mr-[20px] flex items-center gap-[5px]">
        {m}
        <Caret className="text-[#2590c8]" />
      </button>
    ))}
  </nav>
);

const AppWindow = () => (
  <div className="mx-[5px] mt-px flex flex-1 flex-col rounded-t-[5px] border border-t-[#5a9fb8] border-r-[#9a9a98] border-b-[#9a9a98] border-l-[#9a9a98] bg-[#d5d3d6]">
    <div className="flex h-[24px] items-center rounded-t-[4px] border-b border-[#ada69c] bg-gradient-to-b from-[#c2e3ff] to-[#bde3f5] pr-[5px] pl-[5px] text-[11px]">
      <h2 className="flex-1 text-[#222]">СУФД-IC [test test test] - 5.4-patch55-micro5 - 6.0.304_m11 (012.304.005T1) - Текущая дата 25.01.2013</h2>
      <div className="flex gap-[4px]">
        <button aria-label="Развернуть" className="flex h-[15px] w-[14px] items-center justify-center rounded-[2px] border border-[#8fb8d8] bg-[#e8f4ff]">
          <svg width="9" height="8" viewBox="0 0 9 8" fill="#e8f4ff" stroke="#1c86b8">
            <path d="M.5 2.500h5v5h-5zM2.500 .5h6v5h-6z" />
          </svg>
        </button>
        <button aria-label="Закрыть окно" className="flex h-[15px] w-[14px] items-center justify-center rounded-[2px] border border-[#8fb8d8] bg-[#e8f4ff]">
          <svg width="5" height="5" viewBox="0 0 5 5" stroke="#1c86b8">
            <path d="M0 0l5 5M5 0L0 5" />
          </svg>
        </button>
      </div>
    </div>
    <div className="m-[3px] flex flex-1 flex-col">
      <AppMenu />
      <div className="flex flex-1">
        <TreePanel />
        <div className="flex w-[6px] flex-col items-center justify-between bg-[#cce9f5] pt-[368px] pb-[364px]">
          <Grip vertical />
          <Grip vertical />
        </div>
        <main className="flex min-w-0 flex-1 flex-col border-x-2 border-t border-[#9ccbde] bg-[#9ccbde]">
          <Toolbar />
          <div className="flex flex-col gap-[2px] px-[2px] pt-[2px]">
            <FilterBar />
            <Grid />
            <Pager />
          </div>
          <div className="mt-[3px] flex h-[6px] items-center justify-center gap-[72px] bg-[#cce9f5]">
            <Grip />
            <Grip />
          </div>
          <section className="mt-px mb-[2px] flex flex-1 flex-col border-r border-b border-l border-[#ada69c] bg-white">
            <Tabs />
            <Details />
          </section>
        </main>
      </div>
    </div>
  </div>
);

const Arrows = () => (
  <svg width="440" height="340" viewBox="0 0 440 340" fill="none" stroke="#f00" strokeLinecap="round" strokeLinejoin="round" className="pointer-events-none absolute top-0 left-0 z-20">
    <path d="M376 138L412 154M411 140l2 15-18-1" strokeWidth="4.500" />
    <path d="M232 323h37M250 312l20 11-18 10" strokeWidth="4" />
  </svg>
);

export default function App() {
  return (
    <div className="relative flex min-h-screen flex-col bg-white font-['DejaVu_Sans',sans-serif] text-black">
      <BrowserChrome />
      <AppWindow />
      <div className="mt-[3px] h-[2px] bg-[#d6d3ce]" />
      <div className="absolute bottom-[4px] left-0 rounded-tr-[4px] border border-l-0 border-[#b5b1ad] bg-[#efebe7] pr-[4px] pl-[3px] font-['DejaVu_Sans_Condensed','DejaVu_Sans',sans-serif] text-[11px] leading-[16px]">
        javascript:;
      </div>
      <Arrows />
    </div>
  );
}
